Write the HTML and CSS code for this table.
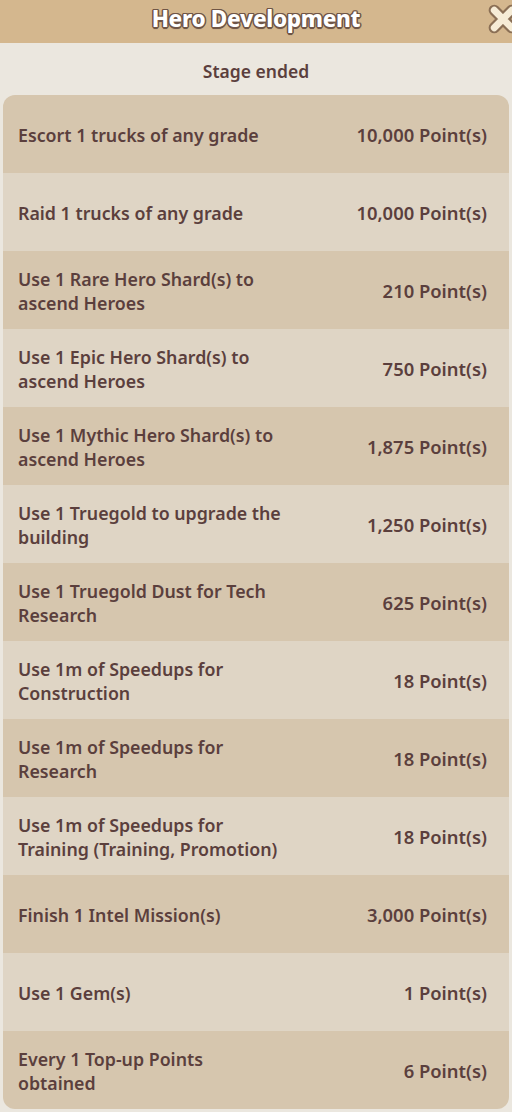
FILE: index.html
```html
<!DOCTYPE html>
<html lang="en">
<head>
<meta charset="utf-8">
<title>Hero Development</title>
<link rel="stylesheet" href="styles.css">
</head>
<body>
<header class="topbar">
  <h1 class="title">Hero Development</h1>
  <button class="close" aria-label="Close">
    <svg viewBox="0 0 24 24" width="30" height="30">
      <path d="M5 5 L19 19 M19 5 L5 19" stroke="#8a6f55" stroke-width="9" stroke-linecap="round"/>
      <path d="M5 5 L19 19 M19 5 L5 19" stroke="#f6ecd6" stroke-width="5.5" stroke-linecap="round"/>
    </svg>
  </button>
</header>
<main class="content">
  <p class="stage">Stage ended</p>
  <ul class="list">
    <li class="row"><span class="task">Escort 1 trucks of any grade</span><span class="pts">10,000 Point(s)</span></li>
    <li class="row"><span class="task">Raid 1 trucks of any grade</span><span class="pts">10,000 Point(s)</span></li>
    <li class="row"><span class="task">Use 1 Rare Hero Shard(s) to<br>ascend Heroes</span><span class="pts">210 Point(s)</span></li>
    <li class="row"><span class="task">Use 1 Epic Hero Shard(s) to<br>ascend Heroes</span><span class="pts">750 Point(s)</span></li>
    <li class="row"><span class="task">Use 1 Mythic Hero Shard(s) to<br>ascend Heroes</span><span class="pts">1,875 Point(s)</span></li>
    <li class="row"><span class="task">Use 1 Truegold to upgrade the<br>building</span><span class="pts">1,250 Point(s)</span></li>
    <li class="row"><span class="task">Use 1 Truegold Dust for Tech<br>Research</span><span class="pts">625 Point(s)</span></li>
    <li class="row"><span class="task">Use 1m of Speedups for<br>Construction</span><span class="pts">18 Point(s)</span></li>
    <li class="row"><span class="task">Use 1m of Speedups for<br>Research</span><span class="pts">18 Point(s)</span></li>
    <li class="row"><span class="task">Use 1m of Speedups for<br>Training (Training, Promotion)</span><span class="pts">18 Point(s)</span></li>
    <li class="row"><span class="task">Finish 1 Intel Mission(s)</span><span class="pts">3,000 Point(s)</span></li>
    <li class="row"><span class="task">Use 1 Gem(s)</span><span class="pts">1 Point(s)</span></li>
    <li class="row"><span class="task">Every 1 Top-up Points<br>obtained</span><span class="pts">6 Point(s)</span></li>
  </ul>
</main>
</body>
</html>
```
FILE: styles.css
```css
* { box-sizing: border-box; }
html, body {
  margin: 0;
  padding: 0;
  background: #ebe7df;
  width: 512px;
  height: 1112px;
  overflow: hidden;
  font-family: "Noto Sans", "DejaVu Sans", sans-serif;
}
.topbar {
  height: 43px;
  background: #d4b78e;
  display: flex;
  align-items: flex-start;
  justify-content: center;
  position: relative;
}
.title {
  margin: 0;
  padding-top: 4px;
  font-size: 22.5px;
  line-height: 30px;
  font-weight: 800;
  color: #ffffff;
  letter-spacing: -0.3px;
  text-shadow:
    -1.5px 0 0 #6f5546, 1.5px 0 0 #6f5546, 0 -1.5px 0 #6f5546, 0 1.5px 0 #6f5546,
    -1px -1px 0 #6f5546, 1px -1px 0 #6f5546, -1px 1px 0 #6f5546, 1px 1px 0 #6f5546,
    0 2px 1px rgba(80,55,40,0.5);
}
.close {
  position: absolute;
  right: -6px;
  top: 4px;
  background: none;
  border: 0;
  padding: 0;
  width: 30px;
  height: 30px;
}
.content {
  padding: 0 3px;
}
.stage {
  margin: 0;
  height: 52px;
  padding-top: 3px;
  display: flex;
  align-items: center;
  justify-content: center;
  font-size: 17.5px;
  font-weight: 600;
  color: #5b3f3d;
}
.list {
  list-style: none;
  margin: 0;
  padding: 0;
  border-radius: 12px;
  overflow: hidden;
}
.row {
  height: 78px;
  display: flex;
  align-items: center;
  justify-content: space-between;
  padding: 2px 22px 0 15px;
  background: #d6c6ae;
  color: #5b3f3d;
  font-size: 17.8px;
  font-weight: 600;
  line-height: 24px;
}
.row:nth-child(even) {
  background: #dfd5c5;
}
.pts { white-space: nowrap; font-size: 18.4px; }
```
